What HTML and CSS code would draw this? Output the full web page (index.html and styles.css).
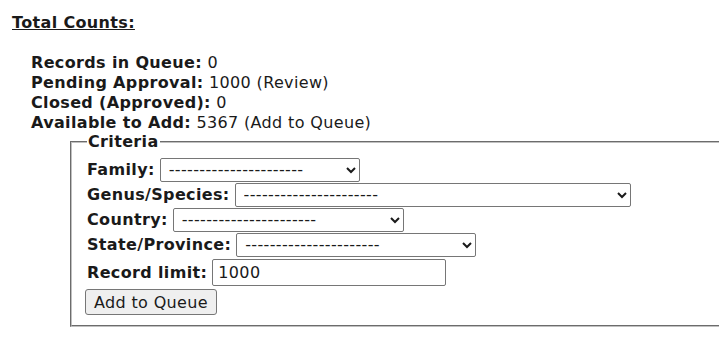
FILE: index.html
```html
<!DOCTYPE html>
<html>
<head>
	<meta charset="utf-8">
	<title>Queue Counts</title>
	<link rel="stylesheet" href="styles.css">
</head>
<body>
	<div class="page">
		<h3 class="title">Total Counts:</h3>
		<div class="counts">
			<div class="row"><b>Records in Queue:</b> 0</div>
			<div class="row"><b>Pending Approval:</b> 1000 (Review)</div>
			<div class="row"><b>Closed (Approved):</b> 0</div>
			<div class="row"><b>Available to Add:</b> 5367 (Add to Queue)</div>
			<fieldset class="criteria">
				<legend>Criteria</legend>
				<div class="field">
					<b>Family:</b>
					<select class="sel-family"><option>----------------------</option></select>
				</div>
				<div class="field">
					<b>Genus/Species:</b>
					<select class="sel-genus"><option>----------------------</option></select>
				</div>
				<div class="field">
					<b>Country:</b>
					<select class="sel-country"><option>----------------------</option></select>
				</div>
				<div class="field">
					<b>State/Province:</b>
					<select class="sel-state"><option>----------------------</option></select>
				</div>
				<div class="field field-limit">
					<b>Record limit:</b>
					<input class="limit" type="text" value="1000">
				</div>
				<div class="field field-btn">
					<button class="add-btn">Add to Queue</button>
				</div>
			</fieldset>
		</div>
	</div>
</body>
</html>
```

FILE: styles.css
```css
html, body {
	margin: 0;
	padding: 0;
	overflow: hidden;
}
body {
	font-family: "DejaVu Sans", Verdana, sans-serif;
	font-size: 16px;
	letter-spacing: 0.35px;
	color: #1a1a1a;
	background: #fff;
}
.page {
	padding: 13px 12px 0 12px;
}
.title {
	margin: 0;
	font-size: 16px;
	text-decoration: underline;
	line-height: 20px;
}
.counts {
	margin: 20px 0 0 19px;
}
.row {
	line-height: 20px;
}
.criteria {
	margin: 0 0 0 39px;
	width: 700px;
	padding: 6px 15px 10px 15px;
	border: 2px groove #c0c0c0;
}
.criteria legend {
	font-weight: bold;
	padding: 0 1px;
	line-height: 18px;
}
.field {
	display: flex;
	align-items: center;
	gap: 5px;
	height: 25px;
}
.field-limit {
	height: 28px;
	margin-top: 1px;
}
.field-btn {
	height: 26px;
	margin-top: 3px;
}
select, input, button {
	font-family: "DejaVu Sans", Verdana, sans-serif;
	font-size: 16px;
	letter-spacing: 0.35px;
	color: #1a1a1a;
}
select {
	height: 24px;
	border: 1px solid #767676;
	border-radius: 2px;
	background: #fff;
	padding: 0 4px;
}
.sel-family { width: 200px; }
.sel-genus { width: 396px; }
.sel-country { width: 231px; }
.sel-state { width: 240px; }
.limit {
	width: 234px;
	height: 27px;
	box-sizing: border-box;
	border: 1px solid #767676;
	border-radius: 2px;
	padding: 0 5px;
}
.add-btn {
	height: 26px;
	margin-left: -2px;
	padding: 0 8px;
	border: 1px solid #767676;
	border-radius: 3px;
	background: #efefef;
}
```
